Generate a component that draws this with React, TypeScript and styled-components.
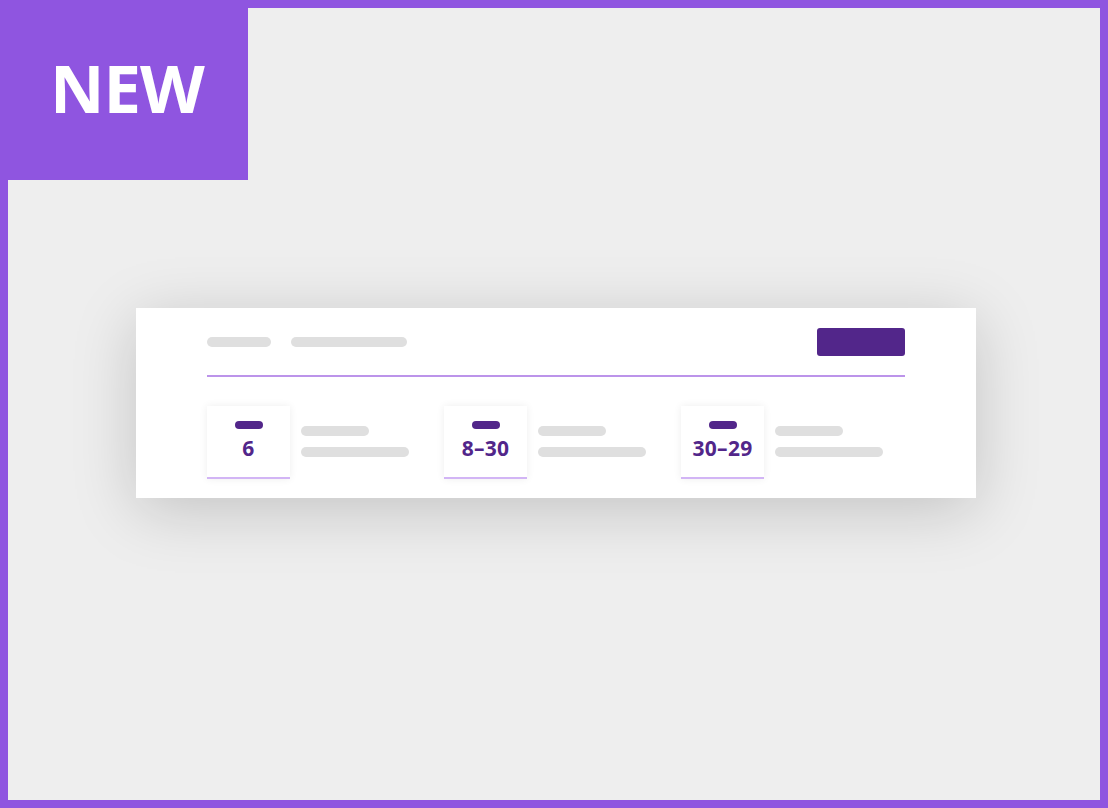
import React from 'react';
import styled, { createGlobalStyle } from 'styled-components';

const GlobalStyle = createGlobalStyle`
  html, body {
    margin: 0;
    padding: 0;
    background: #eeeeee;
  }
  * {
    box-sizing: border-box;
  }
`;

const ranges = ['6', '8–30', '30–29'];

const App = () => {
  return (
    <>
      <GlobalStyle />
      <Frame>
        <Badge>NEW</Badge>
        <Card>
          <TopRow>
            <Pill width={64} />
            <Pill width={116} />
            <Spacer />
            <Button />
          </TopRow>
          <Divider />
          <Items>
            {ranges.map(range => (
              <Item key={range}>
                <RangeBox>
                  <Tag />
                  <Range>{range}</Range>
                </RangeBox>
                <Lines>
                  <Pill width={68} />
                  <Pill width={108} />
                </Lines>
              </Item>
            ))}
          </Items>
        </Card>
      </Frame>
    </>
  );
};

export default App;

const Frame = styled.div`
  position: relative;
  width: 1108px;
  height: 808px;
  border: 8px solid #8f55e0;
  background: #eeeeee;
  display: flex;
  align-items: center;
  justify-content: center;
  padding-left: 4px;
  padding-bottom: 2px;
`;

const Badge = styled.div`
  position: absolute;
  top: -8px;
  left: -8px;
  width: 248px;
  height: 180px;
  background: #8f55e0;
  color: #ffffff;
  font-family: "Open Sans", "DejaVu Sans", sans-serif;
  font-weight: 700;
  font-size: 67px;
  letter-spacing: -1px;
  display: flex;
  align-items: center;
  justify-content: center;
  padding-left: 6px;
  padding-bottom: 6px;
`;

const Card = styled.div`
  width: 840px;
  height: 190px;
  background: #ffffff;
  padding: 20px 71px 19px;
  box-shadow: 0 12px 60px rgba(0, 0, 0, 0.18);
  display: flex;
  flex-direction: column;
`;

const TopRow = styled.div`
  display: flex;
  align-items: center;
  gap: 20px;
  height: 28px;
`;

const Spacer = styled.div`
  flex: 1;
`;

const Pill = styled.div<{ width: number }>`
  width: ${({ width }) => width}px;
  height: 10px;
  border-radius: 5px;
  background: #dfdfdf;
`;

const Button = styled.div`
  width: 88px;
  height: 28px;
  border-radius: 3px;
  background: #52268a;
`;

const Divider = styled.div`
  margin-top: 19px;
  height: 2px;
  background: #bc94ea;
`;

const Items = styled.div`
  margin-top: 29px;
  display: flex;
  gap: 35px;
`;

const Item = styled.div`
  display: flex;
  align-items: flex-start;
  gap: 11px;
`;

const RangeBox = styled.div`
  width: 83px;
  height: 73px;
  background: #ffffff;
  border-bottom: 2px solid #d2b5f5;
  box-shadow: 0 0 8px rgba(0, 0, 0, 0.07);
  display: flex;
  flex-direction: column;
  align-items: center;
  padding-top: 15px;
`;

const Tag = styled.div`
  width: 28px;
  height: 8px;
  border-radius: 4px;
  background: #52268a;
`;

const Range = styled.div`
  margin-top: 6px;
  font-family: "Open Sans", "DejaVu Sans", sans-serif;
  font-weight: 700;
  font-size: 21px;
  line-height: 26px;
  letter-spacing: 0.3px;
  color: #52268a;
`;

const Lines = styled.div`
  display: flex;
  flex-direction: column;
  gap: 11px;
  padding-top: 20px;
`;
